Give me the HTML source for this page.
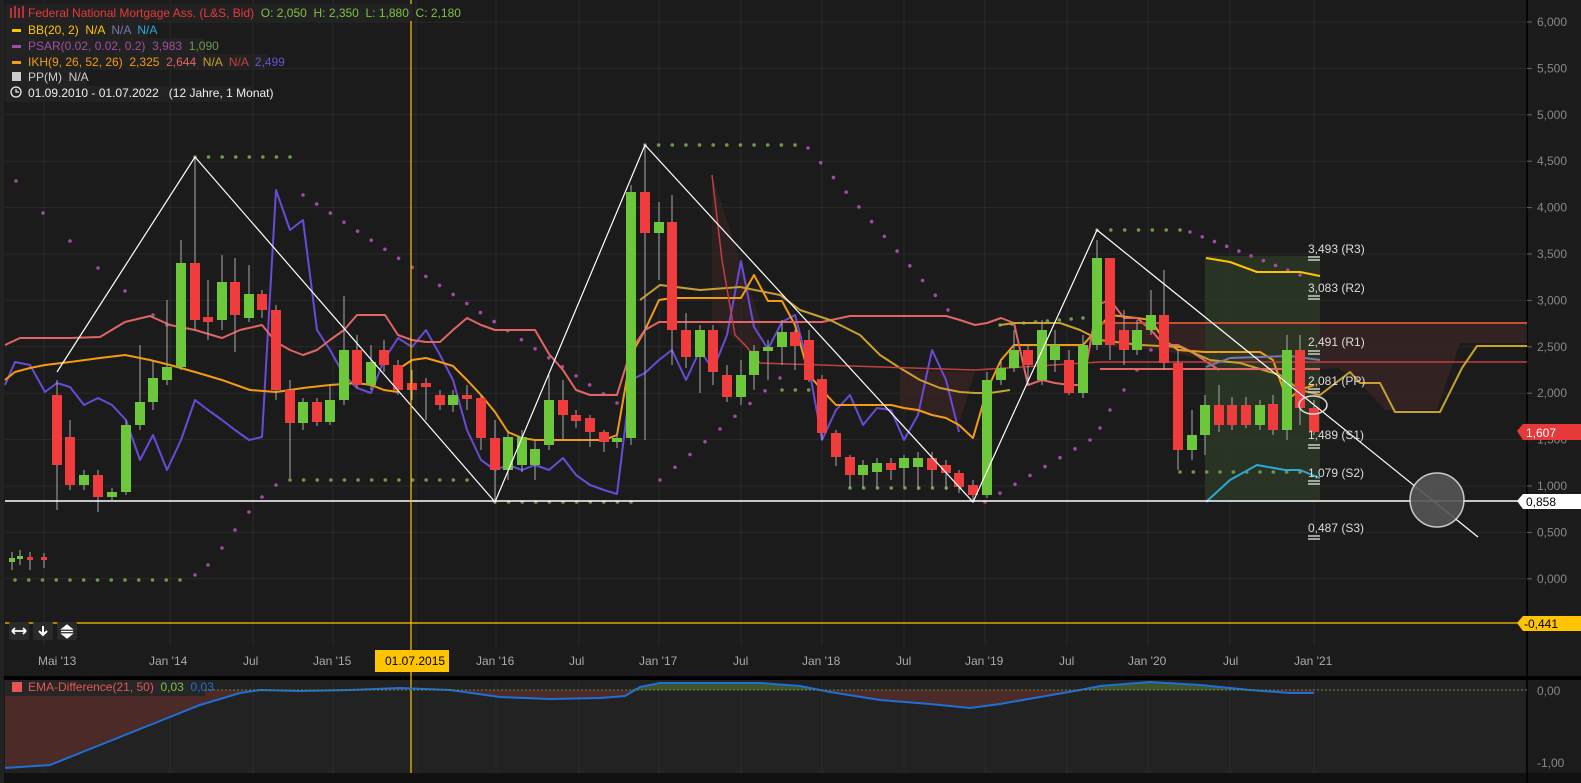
<!DOCTYPE html>
<html><head><meta charset="utf-8"><style>
html,body{margin:0;padding:0;background:#1b1b1b;width:1581px;height:783px;overflow:hidden;font-family:"Liberation Sans",sans-serif}
svg{position:absolute;left:0;top:0}
text{white-space:pre}
</style></head><body>
<svg id="s" width="1581" height="783" xmlns="http://www.w3.org/2000/svg" font-family="Liberation Sans, sans-serif" xml:space="preserve">
<rect width="1581" height="783" fill="#1b1b1b"/>
<rect x="5" y="680" width="1522" height="93" fill="#222"/>
<rect x="0" y="676" width="1581" height="4" fill="#000"/>
<rect x="0" y="773" width="1581" height="10" fill="#111"/>
<rect x="0" y="0" width="4" height="783" fill="#222"/>
<g id="grid" stroke="#2a2a2a" stroke-width="1"></g>
<line x1="1527" y1="0" x2="1527" y2="783" stroke="#000" stroke-width="1.5"/>
<polygon points="1100,323 1527,323 1527,343 1460,343 1437,410 1385,410 1360,383 1338,368 1310,370 1290,390 1258,375 1220,362 1160,350 1100,345" fill="#3a2424" opacity="0.8"/>
<polygon points="1205,256 1320,256 1320,500 1205,500" fill="#2d3a26" opacity="0.8"/>
<polygon points="712,175 760,320 760,360 712,320" fill="#3a2424" opacity="0.6"/>
<polygon points="900,370 975,372 960,420 900,410" fill="#3a2424" opacity="0.7"/>
<g id="dots"></g>
<g id="lines" fill="none" stroke-width="2" stroke-linejoin="round"></g>
<g id="candles"></g>
<g stroke="#fff" stroke-width="1.2" fill="none">
<polyline points="57,372 195,157 495,502 645,145 973,502 1097,230 1478,537"/>
</g>
<line x1="5" y1="501" x2="1527" y2="501" stroke="#fff" stroke-width="1.5"/>
<line x1="5" y1="623" x2="1527" y2="623" stroke="#ffc400" stroke-width="1.2"/>
<line x1="411" y1="0" x2="411" y2="773" stroke="#ffc400" stroke-width="1.2"/>
<circle cx="1437" cy="500" r="27" fill="#555" stroke="#ddd" stroke-width="1.5" opacity="0.9"/>
<ellipse cx="1313" cy="405" rx="14" ry="9" fill="none" stroke="#ddd" stroke-width="1.5"/>
<g fill="#ddd" font-size="12">
<text x="1308" y="253">3,493 (R3)</text><text x="1308" y="292">3,083 (R2)</text>
<text x="1308" y="346">2,491 (R1)</text><text x="1308" y="385">2,081 (PP)</text>
<text x="1308" y="439">1,489 (S1)</text><text x="1308" y="477">1,079 (S2)</text>
<text x="1308" y="532">0,487 (S3)</text>
</g>
<g stroke="#ccc" stroke-width="1.5">
<line x1="1308" y1="257" x2="1320" y2="257"/><line x1="1308" y1="260" x2="1320" y2="260"/>
<line x1="1308" y1="296" x2="1320" y2="296"/><line x1="1308" y1="299" x2="1320" y2="299"/>
<line x1="1308" y1="351" x2="1320" y2="351"/><line x1="1308" y1="354" x2="1320" y2="354"/>
<line x1="1308" y1="389" x2="1320" y2="389"/><line x1="1308" y1="392" x2="1320" y2="392"/>
<line x1="1308" y1="445" x2="1320" y2="445"/><line x1="1308" y1="448" x2="1320" y2="448"/>
<line x1="1308" y1="481" x2="1320" y2="481"/><line x1="1308" y1="484" x2="1320" y2="484"/>
<line x1="1308" y1="536" x2="1320" y2="536"/><line x1="1308" y1="539" x2="1320" y2="539"/>
</g>
<g id="axis" fill="#888" font-size="12"></g>
<polygon points="1517,431 1523,424 1581,424 1581,440 1523,440" fill="#e8393a"/>
<text x="1526" y="437" fill="#fff" font-size="12">1,607</text>
<polygon points="1517,501 1523,494 1581,494 1581,509 1523,509" fill="#fff"/>
<text x="1526" y="506" fill="#000" font-size="12">0,858</text>
<polygon points="1517,623 1523,616 1581,616 1581,631 1523,631" fill="#ffc400"/>
<text x="1524" y="628" fill="#000" font-size="12">-0,441</text>
<g fill="#aaa" font-size="12">
<text x="38" y="665">Mai '13</text><text x="149" y="665">Jan '14</text><text x="243" y="665">Jul</text>
<text x="313" y="665">Jan '15</text><text x="476" y="665">Jan '16</text><text x="569" y="665">Jul</text>
<text x="639" y="665">Jan '17</text><text x="733" y="665">Jul</text><text x="802" y="665">Jan '18</text>
<text x="896" y="665">Jul</text><text x="965" y="665">Jan '19</text><text x="1059" y="665">Jul</text>
<text x="1128" y="665">Jan '20</text><text x="1223" y="665">Jul</text><text x="1294" y="665">Jan '21</text>
</g>
<rect x="375" y="650" width="74" height="22" fill="#ffc400"/>
<text x="385" y="665" fill="#000" font-size="12">01.07.2015</text>
<g><rect x="9" y="622" width="20" height="18" rx="2" fill="#2a2a2a"/><rect x="33" y="622" width="20" height="18" rx="2" fill="#2a2a2a"/><rect x="57" y="622" width="20" height="18" rx="2" fill="#2a2a2a"/>
<path d="M12 631h14M12 631l3-3M12 631l3 3M26 631l-3-3M26 631l-3 3" stroke="#fff" stroke-width="1.8" fill="none"/>
<path d="M43 626v8M39 631l4 4 4-4" stroke="#fff" stroke-width="2" fill="none"/>
<path d="M62 629l5-4 5 4zM62 634l5 4 5-4zM61 631.5h12" fill="#fff" stroke="#fff" stroke-width="1.2"/></g>
<path id="ema" fill="none" stroke="#1f6fd6" stroke-width="2"/>
<line x1="5" y1="690" x2="1527" y2="690" stroke="#6a8a3a" stroke-dasharray="2,2"/>
<text x="1537" y="695" fill="#888" font-size="12">0,00</text>
<text x="1537" y="767" fill="#888" font-size="12">-1,00</text>
<rect x="5" y="680" width="200" height="16" fill="#262626"/>
<rect x="12" y="682" width="10" height="10" fill="#e85555"/>
<text x="28" y="691" fill="#e85555" font-size="12">EMA-Difference(21, 50)  <tspan fill="#7dc242">0,03</tspan>  <tspan fill="#1f6fd6">0,03</tspan></text>
<g font-size="12">
<rect x="5" y="4" width="408" height="17" fill="#222"/>
<text x="28" y="17" fill="#e8393a">Federal National Mortgage Ass. (L&amp;S, Bid)  <tspan fill="#7dc242">O: 2,050  H: 2,350  L: 1,880  C: 2,180</tspan></text>
<path d="M11 8v10M15 6v12M19 8v10M23 6v12" stroke="#e8393a" stroke-width="1.5"/>
<rect x="5" y="22" width="143" height="16" fill="#222"/>
<rect x="12" y="29" width="9" height="3" fill="#ffc400"/>
<text x="28" y="34" fill="#ffc400">BB(20, 2)  N/A  <tspan fill="#7777aa">N/A</tspan>  <tspan fill="#2aa8d8">N/A</tspan></text>
<rect x="5" y="38" width="200" height="16" fill="#222"/>
<rect x="12" y="45" width="9" height="3" fill="#a050a0"/>
<text x="28" y="50" fill="#a050a0">PSAR(0.02, 0.02, 0.2)  3,983  <tspan fill="#6f9a4a">1,090</tspan></text>
<rect x="5" y="54" width="262" height="16" fill="#222"/>
<rect x="12" y="61" width="9" height="3" fill="#f39c12"/>
<text x="28" y="66" fill="#f39c12">IKH(9, 26, 52, 26)  2,325  <tspan fill="#e06666">2,644</tspan>  <tspan fill="#c8a030">N/A</tspan>  <tspan fill="#c04040">N/A</tspan>  <tspan fill="#7050d0">2,499</tspan></text>
<rect x="5" y="70" width="82" height="16" fill="#222"/>
<rect x="12" y="72" width="9" height="9" fill="#ccc"/>
<text x="28" y="81" fill="#ccc">PP(M)  N/A</text>
<rect x="5" y="86" width="246" height="16" fill="#222"/>
<circle cx="16" cy="92" r="5" fill="none" stroke="#eee" stroke-width="1.3"/><path d="M16 89v3h3" stroke="#eee" stroke-width="1.2" fill="none"/>
<text x="28" y="97" fill="#eee">01.09.2010 - 01.07.2022   (12 Jahre, 1 Monat)</text>
</g>
</svg>
<script>
var NS="http://www.w3.org/2000/svg";
function el(p,t,a){var e=document.createElementNS(NS,t);for(var k in a)e.setAttribute(k,a[k]);p.appendChild(e);return e;}
var g=document.getElementById('grid');
for(var y=22;y<=620;y+=46.4)el(g,'line',{x1:5,y1:y,x2:1527,y2:y});
[44,170,253,333,416,496,579,659,741,822,904,985,1067,1148,1230,1314].forEach(function(x){el(g,'line',{x1:x,y1:0,x2:x,y2:646});el(g,'line',{x1:x,y1:680,x2:x,y2:773});});
var ax=document.getElementById('axis');
var labs=["6,000","5,500","5,000","4,500","4,000","3,500","3,000","2,500","2,000","1,500","1,000","0,500","0,000"];
labs.forEach(function(l,i){var y=22+i*46.4;el(ax,'line',{x1:1527,y1:y,x2:1532,y2:y,stroke:'#666'});var t=el(ax,'text',{x:1537,y:y+4});t.textContent=l;});
var C=[[57,395,465,380,510],[70,437,485,420,490],[84,485,475,470,490],[98,475,497,470,512],[112,497,492,488,500],[126,492,425,420,495],[140,425,402,345,430],[153,402,378,360,410],[167,380,367,300,385],[181,367,263,240,370],[195,263,320,157,330],[208,317,322,280,340],[222,320,282,255,330],[235,282,315,258,352],[249,318,294,265,322],[262,294,310,290,318],[276,310,390,305,400],[290,390,423,380,478],[303,423,402,398,430],[317,402,422,398,426],[330,422,400,385,425],[344,400,350,296,405],[357,350,385,335,388],[371,385,362,345,390],[384,350,365,340,372],[398,365,390,360,395],[412,383,390,370,400],[426,383,387,378,420],[440,395,405,390,410],[453,405,395,390,412],[467,395,399,385,410],[481,398,438,395,450],[495,438,470,420,500],[508,470,437,430,480],[522,465,437,430,472],[535,465,449,440,480],[549,445,400,375,450],[563,400,415,380,440],[576,415,421,410,428],[590,418,432,415,447],[604,432,442,430,452],[617,442,438,433,448],[631,438,192,185,445],[645,192,233,145,440],[659,233,222,202,280],[672,222,330,195,365],[686,330,357,313,368],[700,357,330,325,393],[713,330,372,325,385],[727,375,397,365,402],[741,397,375,360,405],[754,375,351,345,390],[768,351,347,340,380],[782,347,332,320,365],[795,332,346,330,370],[809,340,380,330,382],[822,379,433,375,440],[836,433,457,430,466],[850,457,475,455,488],[863,475,465,460,488],[877,472,463,458,488],[891,463,470,458,480],[904,468,458,455,488],[918,467,458,452,490],[932,458,470,452,488],[946,465,473,460,490],[959,473,487,470,493],[973,485,495,480,502],[987,495,380,372,498],[1001,380,368,360,385],[1014,368,350,330,372],[1028,350,365,345,385],[1042,380,330,320,385],[1055,360,345,330,372],[1069,360,393,350,395],[1083,393,345,335,398],[1097,345,258,240,350],[1110,258,345,260,360],[1124,330,350,310,365],[1137,350,330,320,355],[1151,330,315,290,335],[1164,315,363,270,370],[1178,363,450,350,470],[1192,450,435,410,460],[1205,435,405,395,455],[1219,405,425,385,432],[1232,405,425,397,430],[1246,405,425,397,428],[1260,425,405,400,430],[1273,404,430,395,435],[1287,430,350,335,440],[1300,350,408,335,425],[1314,408,432,400,435],
[12,562,558,552,570],[20,558,556,550,565],[30,557,559,552,570],[44,557,559,553,568]];
var cg=document.getElementById('candles');
C.forEach(function(c){var x=c[0],o=c[1],cl=c[2],h=c[3],l=c[4];var up=cl<o;var col=up?'#6cc83a':'#f03c3c';var w=c[0]<50?6:10;
el(cg,'line',{x1:x,y1:h,x2:x,y2:l,stroke:'#aaa','stroke-width':1});
var t=Math.min(o,cl),b=Math.max(o,cl);if(b-t<3)b=t+3;
el(cg,'rect',{x:x-w/2,y:t,width:w,height:b-t,fill:col});});
var L=document.getElementById('lines');
function pl(pts,col,w){el(L,'polyline',{points:pts,stroke:col,'stroke-width':w||2});}
pl("5,385 15,362 30,365 45,392 57,383 70,387 84,405 98,398 112,405 126,420 140,460 153,435 167,470 181,440 195,400 208,410 222,420 235,430 249,440 262,437 276,190 290,230 303,220 317,330 330,350 344,375 357,388 371,393 384,360 398,338 412,347 426,330 440,355 453,380 467,430 481,460 495,470 508,465 522,470 535,465 549,470 563,458 576,475 590,485 604,490 617,494 631,380 645,373 659,360 672,350 686,380 700,350 713,370 727,335 741,261 754,327 768,349 782,322 795,315 809,368 822,440 836,410 850,395 863,425 877,408 891,410 904,440 918,415 932,350 946,380 959,432","#6a4ad8",2);
pl("400,368 412,360 426,358 440,362 453,366 467,380 481,395 495,412 508,432 522,438 535,440 549,440 563,440 576,440 590,440 604,440 617,435 631,355 645,330 659,300 672,298 700,298 727,298 741,298 754,275 768,301 782,301 795,325 809,375 822,390 836,405 850,405 863,405 877,405 891,405 904,408 918,410 932,415 946,418 959,425 973,438 987,390 1001,360 1014,345 1028,345 1055,345 1083,345 1110,315 1137,318 1151,320 1164,340 1178,350 1205,352 1232,352 1260,352 1273,360 1287,400 1300,390 1314,385","#f39c12",2);
pl("5,345 20,338 40,338 70,338 100,337 125,322 150,316 170,325 195,330 222,338 240,330 262,325 276,342 290,350 303,355 317,350 330,340 344,330 357,315 371,315 385,315 398,335 412,340 426,342 440,342 453,330 467,318 481,325 495,330 508,330 535,330 549,354 563,370 576,390 590,395 604,395 617,395 631,350 645,330 659,322 672,322 700,322 741,322 782,322 822,322 850,316 904,316 946,316 960,320 975,325 987,323 1001,318 1014,323 1028,385 1042,380 1055,383 1069,385 1083,385 1097,305 1110,300 1124,318 1137,318 1151,330 1164,345 1178,345 1192,352 1219,370","#e06666",2);
pl("5,380 15,372 30,368 45,365 70,362 100,358 125,355 150,360 170,365 195,372 222,380 250,390 276,392 290,390 303,388 330,385 357,383 371,385 384,390 398,392","#f39c12",2);
pl("640,300 660,285 700,290 740,287 780,295 800,310 830,320 860,335 880,355 900,368 920,380 940,388 960,392 975,393 990,393 1010,390","#c8a030",2);
pl("712,175 722,260 735,335 745,345 760,363 975,370 1100,362 1527,362","#c04040",1.5);
pl("1000,325 1015,323 1060,323 1080,330 1100,340 1140,345 1180,347 1210,360 1240,363 1280,375 1300,390 1320,395 1350,372 1360,383 1380,383 1395,412 1440,412 1462,368 1477,346 1527,346","#c8a030",2);
pl("1100,323 1527,323","#c85030",2);
pl("1206,258 1230,262 1257,272 1300,272 1320,276","#ffc400",2);
pl("1206,367 1230,358 1290,356 1320,360","#7777aa",2);
pl("1206,502 1230,480 1257,465 1285,470 1300,470 1320,478","#2aa8d8",2);
pl("1100,369 1320,369","#e06666",2);
var D=document.getElementById('dots');
function dot(x,y,c){el(D,'circle',{cx:x,cy:y,r:1.8,fill:c});}
var P='#a04ca0',G='#6f9a4a';
function run(x0,y0,x1,y1,n,c){for(var i=0;i<n;i++){dot(x0+(x1-x0)*i/(n-1),y0+(y1-y0)*i/(n-1),c);}}
run(15,580,180,580,13,G);
[[16,181],[43,213],[70,241],[98,268],[125,291],[153,315],[167,325]].forEach(function(p){dot(p[0],p[1],P)});
[[195,575],[208,565],[222,548],[235,530],[249,512],[262,497],[276,485]].forEach(function(p){dot(p[0],p[1],P)});
run(195,157,290,157,8,G);run(290,480,467,480,14,G);
run(303,195,617,403,24,P);
run(495,502,631,502,11,G);
run(645,145,795,145,12,G);
run(808,148,948,310,12,P);
run(782,390,822,390,4,G);run(850,488,960,488,9,G);
run(660,480,780,378,9,P);
run(985,502,1090,440,8,P);dot(1100,428,P);dot(1110,410,P);dot(1124,390,P);dot(1137,370,P);dot(1151,350,P);dot(1164,330,P);
run(1000,325,1083,318,8,G);
run(1097,230,1180,230,7,G);
run(1190,232,1300,275,10,P);
run(1180,472,1300,472,10,G);
var E=[[5,768],[50,765],[100,745],[150,725],[200,705],[240,693],[260,690],[300,691],[350,690],[400,688],[450,690],[500,697],[550,699],[600,698],[625,696],[640,687],[660,683],[700,683],[760,683],[800,686],[830,692],[880,700],[930,704],[970,708],[1000,704],[1040,697],[1080,690],[1100,686],[1150,682],[1200,685],[1250,690],[1290,693],[1314,693]];
var d="M"+E.map(function(p){return p.join(',')}).join(' L');
document.getElementById('ema').setAttribute('d',d);
var s=document.getElementById('s');
var ar=el(s,'path',{d:d+" L1314,690 L5,690 Z",fill:'#5a2e2a',opacity:0.75});
s.insertBefore(ar,document.getElementById('ema'));
var gr=el(s,'path',{d:"M630,690 L640,687 660,683 700,683 760,683 800,686 820,690 Z M1080,690 L1100,686 1150,682 1200,685 1250,690 Z",fill:'#3e5a2a',opacity:0.9});
s.insertBefore(gr,document.getElementById('ema'));
</script>
</body></html>
